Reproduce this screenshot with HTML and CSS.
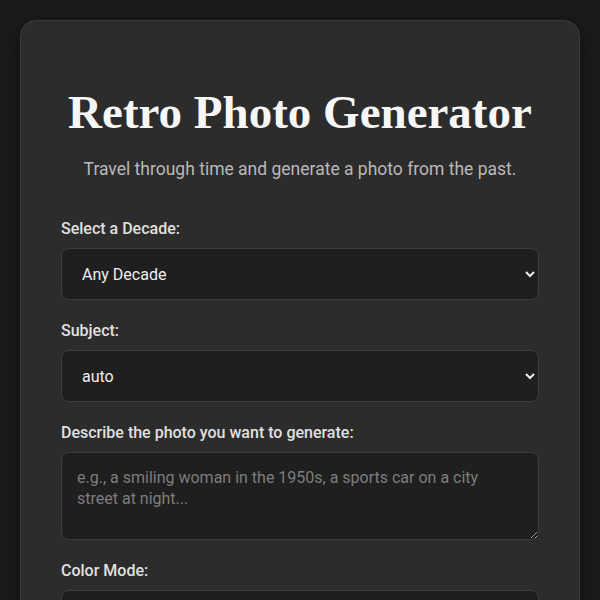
FILE: index.html
```html
<!DOCTYPE html>
<html lang="en">
<head>
<meta charset="utf-8">
<title>Retro Photo Generator</title>
<link rel="stylesheet" href="styles.css">
</head>
<body>
<main class="card">
  <h1 class="title">Retro Photo Generator</h1>
  <p class="subtitle">Travel through time and generate a photo from the past.</p>
  <div class="group">
    <label class="label" for="decade">Select a Decade:</label>
    <select id="decade" class="field">
      <option>Any Decade</option>
    </select>
  </div>
  <div class="group">
    <label class="label" for="subject">Subject:</label>
    <select id="subject" class="field">
      <option>auto</option>
    </select>
  </div>
  <div class="group">
    <label class="label" for="desc">Describe the photo you want to generate:</label>
    <textarea id="desc" class="field area" placeholder="e.g., a smiling woman in the 1950s, a sports car on a city street at night..."></textarea>
  </div>
  <div class="group">
    <label class="label" for="color">Color Mode:</label>
    <select id="color" class="field">
      <option>Auto</option>
    </select>
  </div>
</main>
</body>
</html>
```
FILE: styles.css
```css
html, body {
  margin: 0;
  padding: 0;
}
body {
  background: #1b1b1b;
  font-family: Roboto, "Liberation Sans", sans-serif;
  color: #e6e6e6;
  padding: 20px;
}
.card {
  background: #2c2c2c;
  border: 1px solid #3a3a3a;
  border-radius: 16px;
  padding: 40px;
  box-shadow: 0 6px 24px rgba(0,0,0,0.45);
}
.title {
  font-family: "Liberation Serif", "Times New Roman", serif;
  font-weight: 700;
  font-size: 47px;
  color: #f7f7f7;
  text-align: center;
  white-space: nowrap;
  margin: 23px 0 17px;
  line-height: 56px;
}
.subtitle {
  text-align: center;
  color: #b9b9b9;
  font-size: 17.5px;
  margin: 0 0 38px;
  line-height: 24px;
}
.group {
  margin-bottom: 21px;
}
.label {
  display: block;
  font-size: 16px;
  font-weight: 500;
  color: #e0e0e0;
  line-height: 19px;
  margin-bottom: 10px;
}
.field {
  display: block;
  width: 100%;
  box-sizing: border-box;
  height: 52px;
  padding: 0 12px 0 16px;
  background: #1f1f1f;
  border: 1px solid #3d3d3d;
  border-radius: 8px;
  color: #eeeeee;
  font-family: Roboto, "Liberation Sans", sans-serif;
  font-size: 16px;
  color-scheme: dark;
}
.area {
  height: 88px;
  padding: 14px 15px;
  line-height: 21px;
  resize: vertical;
}
.area::placeholder {
  color: #7d7d7d;
}
```
